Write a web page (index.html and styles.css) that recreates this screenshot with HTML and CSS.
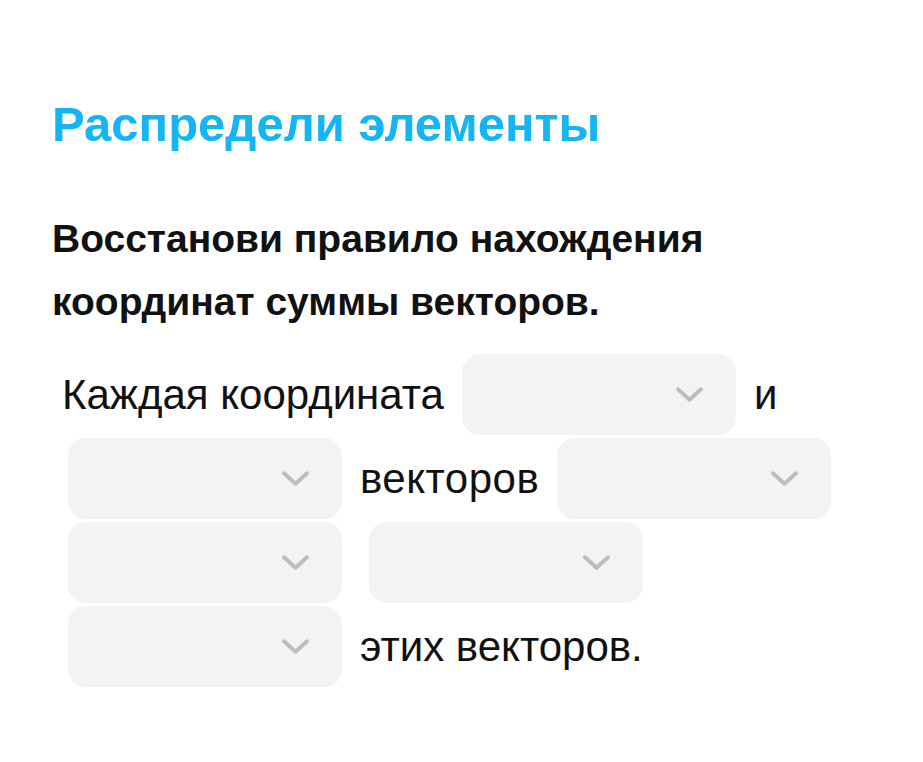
FILE: index.html
```html
<!DOCTYPE html>
<html lang="ru">
<head>
  <meta charset="UTF-8">
  <meta name="viewport" content="width=device-width, initial-scale=1.0">
  <title>Распредели элементы</title>
  <link rel="stylesheet" href="styles.css">
</head>
<body>
  <main class="task">
    <h1 class="task-title">Распредели элементы</h1>
    <p class="task-question">Восстанови правило нахождения координат суммы векторов.</p>

    <div class="fill">
      <span class="fill-text fill-start">Каждая координата</span>
      <div class="drop"><svg class="chevron" viewBox="0 0 26 14"><path d="M2 2 L13 12 L24 2"/></svg></div>
      <span class="fill-text">и</span>
      <div class="drop"><svg class="chevron" viewBox="0 0 26 14"><path d="M2 2 L13 12 L24 2"/></svg></div>
      <span class="fill-text fill-wide">векторов</span>
      <div class="drop"><svg class="chevron" viewBox="0 0 26 14"><path d="M2 2 L13 12 L24 2"/></svg></div>
      <div class="drop"><svg class="chevron" viewBox="0 0 26 14"><path d="M2 2 L13 12 L24 2"/></svg></div>
      <div class="drop drop-spaced"><svg class="chevron" viewBox="0 0 26 14"><path d="M2 2 L13 12 L24 2"/></svg></div>
      <div class="drop"><svg class="chevron" viewBox="0 0 26 14"><path d="M2 2 L13 12 L24 2"/></svg></div>
      <span class="fill-text">этих векторов.</span>
    </div>
  </main>
</body>
</html>
```

FILE: styles.css
```css
body { margin: 0; background: #fff; color: #111; font-family: "Liberation Sans", Arial, sans-serif; }
.task { padding: 94px 40px 0 52px; }
.task-title { margin: 0; font-size: 49px; line-height: 60px; color: #14b5f5; font-weight: 700; }
.task-question { margin: 53px 0 0; width: 700px; font-size: 39px; line-height: 63px; font-weight: 700; }
.fill { display: flex; flex-wrap: wrap; align-items: center; gap: 3px 18px; margin: 21px 0 0 16px; max-width: 830px; }
.fill-text { font-size: 42px; line-height: 48px; }
.fill-start { margin-left: -6px; }
.fill-wide { letter-spacing: 0.5px; }
.drop { width: 274px; height: 81px; border-radius: 18px; background: #f2f3f5; display: flex; align-items: center; justify-content: flex-end; padding-right: 33px; box-sizing: border-box; }
.drop-spaced { margin-left: 9px; }
.chevron { width: 27px; height: 15px; fill: none; stroke: #bdbdbd; stroke-width: 3.8; stroke-linecap: round; stroke-linejoin: round; }
```
